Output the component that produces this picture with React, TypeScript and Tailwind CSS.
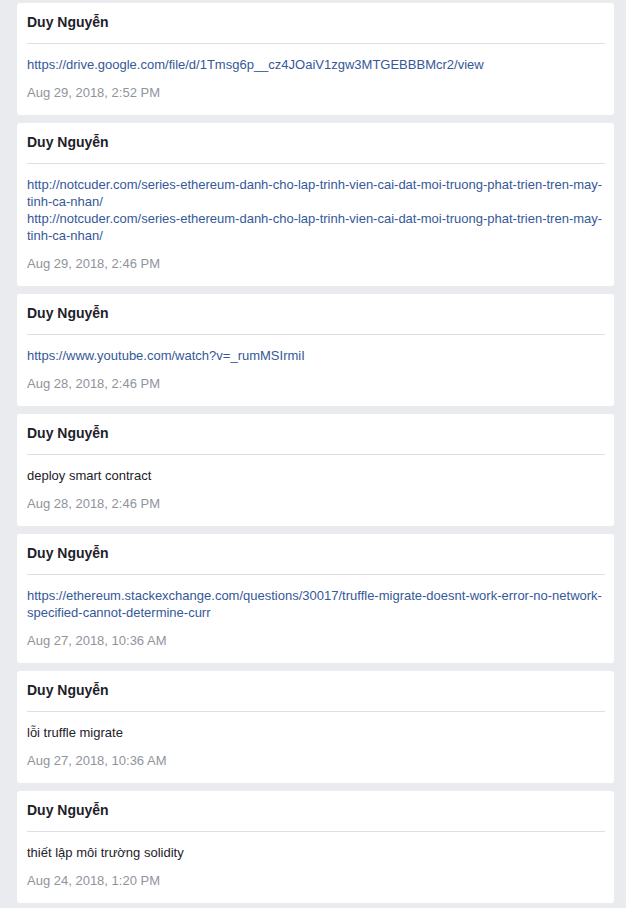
import React from 'react';

type Post = {
  author: string;
  body: string[];
  isLink: boolean;
  time: string;
};

const posts: Post[] = [
  {
    author: 'Duy Nguyễn',
    body: ['https://drive.google.com/file/d/1Tmsg6p__cz4JOaiV1zgw3MTGEBBBMcr2/view'],
    isLink: true,
    time: 'Aug 29, 2018, 2:52 PM',
  },
  {
    author: 'Duy Nguyễn',
    body: [
      'http://notcuder.com/series-ethereum-danh-cho-lap-trinh-vien-cai-dat-moi-truong-phat-trien-tren-may-tinh-ca-nhan/',
      'http://notcuder.com/series-ethereum-danh-cho-lap-trinh-vien-cai-dat-moi-truong-phat-trien-tren-may-tinh-ca-nhan/',
    ],
    isLink: true,
    time: 'Aug 29, 2018, 2:46 PM',
  },
  {
    author: 'Duy Nguyễn',
    body: ['https://www.youtube.com/watch?v=_rumMSIrmiI'],
    isLink: true,
    time: 'Aug 28, 2018, 2:46 PM',
  },
  {
    author: 'Duy Nguyễn',
    body: ['deploy smart contract'],
    isLink: false,
    time: 'Aug 28, 2018, 2:46 PM',
  },
  {
    author: 'Duy Nguyễn',
    body: [
      'https://ethereum.stackexchange.com/questions/30017/truffle-migrate-doesnt-work-error-no-network-specified-cannot-determine-curr',
    ],
    isLink: true,
    time: 'Aug 27, 2018, 10:36 AM',
  },
  {
    author: 'Duy Nguyễn',
    body: ['lỗi truffle migrate'],
    isLink: false,
    time: 'Aug 27, 2018, 10:36 AM',
  },
  {
    author: 'Duy Nguyễn',
    body: ['thiết lập môi trường solidity'],
    isLink: false,
    time: 'Aug 24, 2018, 1:20 PM',
  },
];

const PostCard = ({ post }: { post: Post }) => (
  <div className="bg-white rounded-[3px] px-[10px] pt-[10px] pb-[14px]">
    <h3 className="text-[14px] leading-[18px] font-bold text-[#1d2129]">{post.author}</h3>
    <div className="h-px bg-[#dddfe2] mt-[12px] mr-[-1px]"></div>
    <div className="mt-[12px] text-[13px] leading-[17px]">
      {post.body.map((line, i) =>
        post.isLink ? (
          <a key={i} href="#" className="block text-[#365899] break-words">
            {line}
          </a>
        ) : (
          <p key={i} className="text-[#1d2129]">{line}</p>
        )
      )}
    </div>
    <p className="mt-[11px] text-[13px] leading-[17px] text-[#90949c]">{post.time}</p>
  </div>
);

export default function App() {
  return (
    <div
      className="min-h-screen bg-[#e9ebee] pt-[3px] pl-[17px] pr-[12px] pb-4"
      style={{ fontFamily: '"Liberation Sans", Arial, sans-serif' }}
    >
      <div className="flex flex-col gap-[8px]">
        {posts.map((p, i) => (
          <PostCard key={i} post={p} />
        ))}
      </div>
    </div>
  );
}
